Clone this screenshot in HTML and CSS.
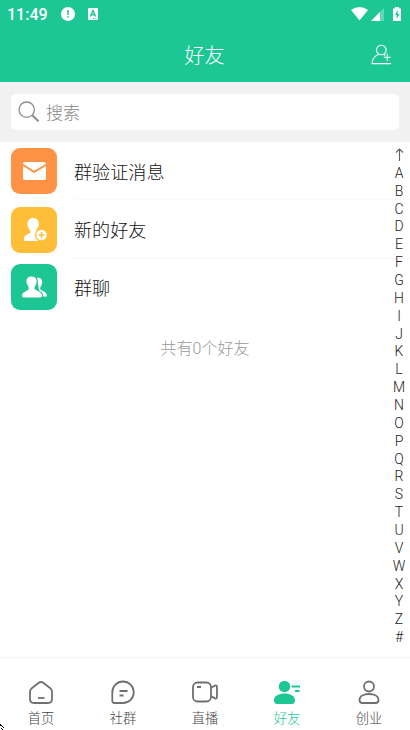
FILE: index.html
```html
<!DOCTYPE html>
<html lang="zh-CN">
<head>
<meta charset="utf-8">
<title>好友</title>
<link rel="stylesheet" href="styles.css">
</head>
<body>
<div class="app">
  <header class="header">
    <div class="status">
      <span class="time">11:49</span>
      <svg class="st-alert" width="14" height="14" viewBox="0 0 14 14"><circle cx="7" cy="7" r="7" fill="#fff"/><path d="M7 3v5M7 9.300v1.500" stroke="#1dc695" stroke-width="1.500"/></svg>
      <svg class="st-app" width="10" height="12" viewBox="0 0 10 12"><rect width="10" height="12" rx="1" fill="#fff"/><path d="M2.400 8.500L5 2.500l2.600 6M3.300 6.700h3.400" fill="none" stroke="#1dc695" stroke-width="1.400"/><path d="M5 10.500h1M7.300 10.500h1" stroke="#1dc695"/></svg>
      <svg class="st-right" width="52" height="16" viewBox="0 0 52 16"><path d="M0 4Q8.500-2 17 4L8.500 14.500Z" fill="#fff"/><path d="M33 2v13H20Z" fill="#fff" opacity=".3"/><path d="M29 6v9h-9Z" fill="#fff"/><path d="M44 1h4v1.500h2V15h-8V2.500h2Z" fill="#fff"/><path d="M46.700 4L44 9h1.700v4L48.400 8h-1.700Z" fill="#1dc695"/></svg>
    </div>
    <div class="titlebar">
      <h1>好友</h1>
      <svg class="add" width="22" height="22" viewBox="0 0 22 22" fill="none" stroke="#fff"><circle cx="10.300" cy="6" r="4.800" stroke-width="1.100"/><path d="M7.500 10.500C3.500 11.800 1.300 15 1 19.600h19" stroke-width="1.100"/><path d="M12.700 10.600l1.500.8M16.200 9.500v7.500M12.700 13.300h7" stroke-width="1.100"/></svg>
    </div>
  </header>
  <div class="search-area">
    <div class="search">
      <svg width="22" height="22" viewBox="0 0 22 22" fill="none" stroke="#8d8d8d"><circle cx="8.700" cy="8.700" r="7.700" stroke-width="1.300"/><path d="M14 14l6.500 6.300" stroke-width="2"/></svg>
      <span>搜索</span>
    </div>
  </div>
  <main class="main">
    <div class="list">
      <div class="row">
        <div class="tile orange"><svg width="46" height="46" viewBox="0 0 46 46"><path d="M12 16Q12 14 14 14H33Q35 14 35 16L23 23Z" fill="#fff"/><path d="M12 17.700L23 25l12-7.300V30q0 2-2 2H14q-2 0-2-2Z" fill="#fff"/><path d="M12 16.800L23 23.800 35 16.800" fill="none" stroke="#ff9345" stroke-width="1.500"/></svg></div>
        <div class="label">群验证消息</div>
      </div>
      <div class="row">
        <div class="tile yellow"><svg width="46" height="46" viewBox="0 0 46 46"><path d="M22 11c4 0 6 2.500 5.700 6.500-.2 2.500-1.400 4-2.200 5.500v2.500c5 2 7 3 7 8.500H13c-.5-5 1.500-6 5.500-7.500 1.500-.8 1-2 .3-3.500-1.200-1.800-2.300-3-2.300-5.500 0-4 2-6.500 5.500-6.500Z" fill="#fff"/><circle cx="30.500" cy="28" r="6.600" fill="#ffbe37"/><circle cx="30.500" cy="28" r="5.300" fill="#fff"/><path d="M30.500 25v6M27.500 28h6" stroke="#ffbe37" stroke-width="1.400"/></svg></div>
        <div class="label">新的好友</div>
      </div>
      <div class="row">
        <div class="tile green"><svg width="46" height="46" viewBox="0 0 46 46"><path d="M26 14c4-.8 5.700 2 5 5.500-.4 2-1.300 3-1.800 4.200-.3 1.500.5 2.200 2.300 3 3 1.400 4.500 2.800 4.500 5.800h-7" fill="#fff"/><path d="M20.500 12.500c4 0 5.500 2.700 5 6-.4 2.500-1.500 3.500-2 5-.3 1.500.5 2 2.500 3 3.500 1.700 5 3 5 5 0 1.500-1 2-2.500 2h-15C11.500 33.500 11 33 11 31.500c0-2 2-3.500 5-5 1.700-.9 2-1.700 1.700-3-.5-1.700-1.700-2.500-2.200-5-.5-3.300 1-6 5-6Z" fill="#fff" stroke="#1dc695" stroke-width="2" paint-order="stroke"/></svg></div>
        <div class="label">群聊</div>
      </div>
      <p class="count">共有0个好友</p>
    </div>
    <div class="index">
      <span><svg width="9" height="13" viewBox="0 0 9 13" fill="none" stroke="#606060" stroke-width="1.100"><path d="M4.500 13V1M1 4.500L4.500 1 8 4.500"/></svg></span>
      <span>A</span><span>B</span><span>C</span><span>D</span><span>E</span><span>F</span><span>G</span><span>H</span><span>I</span><span>J</span><span>K</span><span>L</span><span>M</span><span>N</span><span>O</span><span>P</span><span>Q</span><span>R</span><span>S</span><span>T</span><span>U</span><span>V</span><span>W</span><span>X</span><span>Y</span><span>Z</span><span>#</span>
    </div>
  </main>
  <nav class="tabs">
    <div class="tab"><svg width="28" height="26" viewBox="0 0 28 26"><path d="M5 9L11.500 4Q14 2 16.500 4L23 9Q25 10.500 25 12.500V20Q25 24 21 24H7Q3 24 3 20V12.500Q3 10.500 5 9Z"/><path d="M11 19h6.500"/></svg><span>首页</span></div>
    <div class="tab"><svg width="28" height="26" viewBox="0 0 28 26"><path d="M14 2.500A10.700 10.700 0 0 1 14 24H5.500Q3.300 24 3.300 21.800V13.200A10.700 10.700 0 0 1 14 2.500Z"/><path d="M10.500 12h8M10.500 16.500h4"/></svg><span>社群</span></div>
    <div class="tab"><svg width="28" height="26" viewBox="0 0 28 26"><rect x="2" y="3.500" width="18" height="19" rx="4.500"/><path d="M6 8h4M20.500 8.500L24 6.600Q26 6 26 8v10q0 2-2 1.400l-3.500-2"/></svg><span>直播</span></div>
    <div class="tab active"><svg width="28" height="26" viewBox="0 0 28 26"><circle cx="11.500" cy="7.500" r="5.700"/><path d="M1 21.500C1 17 6 14.500 11.500 14.500S22 17 22 21.500Q22 25 18.500 25h-14Q1 25 1 21.500Z"/><path class="bars" d="M18.500 7.500H27M22 12h4.500"/></svg><span>好友</span></div>
    <div class="tab"><svg width="28" height="26" viewBox="0 0 28 26"><circle cx="14" cy="7.500" r="5"/><path d="M4.500 21C4.500 17 9 15 14 15s9.500 2 9.500 6q0 3-3 3h-13q-3 0-3-3Z"/></svg><span>创业</span></div>
  </nav>
  <svg class="cursor" width="5" height="6" viewBox="0 0 5 6" stroke="#000" fill="none"><path d="M0 .5h1M0 1.500h2M2 2.500h1M3 3.500h1M1 4.500h1M2 5.500h1"/></svg>
</div>
</body>
</html>
```
FILE: styles.css
```css
* { box-sizing: border-box; }
body { margin: 0; font-family: Roboto, "Noto Sans CJK SC", sans-serif; }
.app { position: relative; width: 410px; height: 730px; overflow: hidden; background: #fff; display: flex; flex-direction: column; }
svg { display: block; flex: none; }
.header { height: 82px; flex: none; background: #1dc695; color: #fff; }
.status { height: 28px; display: flex; align-items: center; padding: 0 7px; }
.time { width: 54px; font-size: 16px; font-weight: 500; line-height: 28px; padding-top: 1px; }
.st-app { margin-left: 13px; }
.st-right { margin-left: auto; }
.titlebar { height: 54px; display: grid; grid-template-columns: 1fr auto 1fr; align-items: center; padding: 0 17px 0 16px; }
.titlebar h1 { grid-column: 2; margin: 0; padding-top: 2px; font-size: 20px; line-height: 28px; font-weight: 300; }
.add { justify-self: end; }
.search-area { height: 60px; flex: none; background: #f1f1f1; padding: 12px 11px; }
.search { height: 36px; background: #fff; border-radius: 5px; display: flex; align-items: center; gap: 6px; padding-left: 7px; font-size: 17px; font-weight: 300; color: #888; }
.search span { padding-bottom: 2px; }
.main { flex: none; height: 515px; display: flex; }
.list { width: 388px; }
.row { height: 58.400px; display: flex; padding-left: 11px; }
.tile { width: 46px; height: 46px; margin-top: 6px; border-radius: 9px; }
.orange { background: #ff9345; }
.yellow { background: #ffbe37; }
.green { background: #1dc695; }
.label { flex: 1; margin: 0 -22px 0 17px; font-size: 18.100px; line-height: 61px; font-weight: 300; color: #111; border-bottom: 1px solid #f5f5f5; }
.row:nth-child(1) .label { border-color: #fafafa; }
.row:nth-child(3) .label { border: 0; line-height: 60px; }
.yellow { margin-top: 6.600px; }
.green { margin-top: 5.700px; }
.count { margin: 17px 0 0 22px; text-align: center; font-size: 16px; line-height: 30px; font-weight: 300; color: #999; }
.index { width: 22px; padding-top: 4px; font-size: 14px; font-weight: 300; color: #222; }
.index span { height: 17.860px; display: flex; align-items: center; justify-content: center; }
.tabs { flex: 1; border-top: 1px solid #f3f3f3; display: grid; grid-template-columns: repeat(5, 1fr); }
.tab { display: flex; flex-direction: column; align-items: center; padding-top: 21px; color: #444; font-size: 13.300px; font-weight: 300; line-height: 20px; }
.tab span { margin-top: 4px; }
.tab svg { fill: none; stroke: #707070; stroke-width: 1.800; }
.tab.active { color: #1dc695; }
.tab.active svg { fill: #1dc695; stroke: none; }
.tab.active .bars { stroke: #1dc695; stroke-width: 2; }
.cursor { position: absolute; left: 0; bottom: 0; }
```
